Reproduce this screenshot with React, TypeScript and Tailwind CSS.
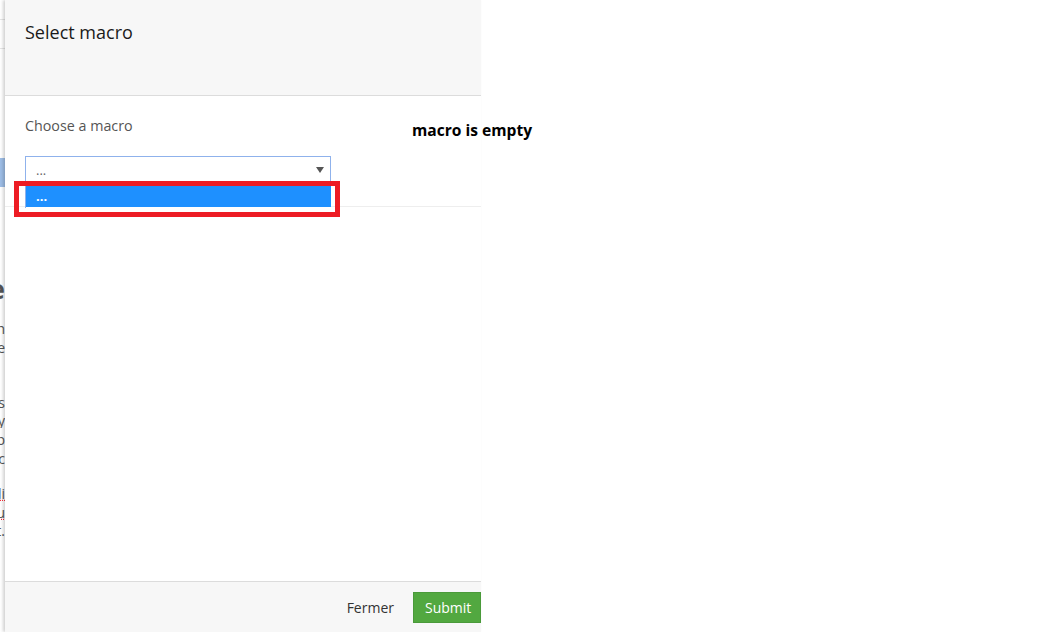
import React from "react";

const bgLines: { top: number; text: string; cls: string }[] = [
  { top: 276, text: "Macro title", cls: "text-[26px] font-bold text-[#555]" },
  { top: 322, text: "Some batch", cls: "text-[14px] text-[#555]" },
  { top: 341, text: "the name", cls: "text-[14px] text-[#555]" },
  { top: 396, text: "macros", cls: "text-[14px] text-[#555]" },
  { top: 414, text: "any", cls: "text-[14px] text-[#555]" },
  { top: 433, text: "tab", cls: "text-[14px] text-[#555]" },
  { top: 452, text: "etc", cls: "text-[14px] text-[#555]" },
  { top: 487, text: "edi", cls: "text-[14px] text-[#555] underline decoration-dotted decoration-red-500" },
  { top: 506, text: "au", cls: "text-[14px] text-[#555] underline decoration-dotted decoration-red-500" },
  { top: 524, text: "t.", cls: "text-[14px] text-[#555]" },
];

export default function App() {
  return (
    <div
      className="relative w-[1046px] h-[632px] overflow-hidden bg-white"
      style={{ fontFamily: '"Open Sans", "Liberation Sans", sans-serif' }}
    >
      {/* background page strip behind the modal */}
      <div className="relative w-[5px] h-[632px] overflow-hidden bg-white">
        <div className="absolute left-0 top-[19px] w-[5px] h-px bg-[#e5e5e5]" />
        <div className="absolute left-0 top-[48px] w-[5px] h-px bg-[#e5e5e5]" />
        <div className="absolute left-0 top-[158px] w-[5px] h-[29px] bg-[#9dbde6]" />
        {bgLines.map((l, i) => (
          <div
            key={i}
            className="absolute left-0 w-[5px] flex justify-end overflow-hidden whitespace-nowrap leading-none"
            style={{ top: l.top }}
          >
            <span className={l.cls}>{l.text}</span>
          </div>
        ))}
      </div>

      {/* modal */}
      <div className="absolute left-[5px] top-0 w-[476px] h-[632px] flex flex-col bg-white shadow-[-2px_0_3px_rgba(0,0,0,0.18)]">
        <div className="h-[96px] shrink-0 bg-[#f7f7f7] border-b border-[#dcdcdc] px-5 pt-[20px]">
          <h1 className="text-[18px] leading-[25px] text-[#1a1a1a]">Select macro</h1>
        </div>
        <div className="h-[111px] shrink-0 border-b border-[#eeeeee] px-5 pt-[20px]">
          <div className="text-[14.3px] leading-[20px] text-[#555]">Choose a macro</div>
          <div className="relative mt-[20px] w-[306px]">
            <div className="h-[27px] border border-[#8fb2ec] border-b-0 bg-white flex items-center justify-between pl-[10px] pr-[6px]">
              <span className="text-[13px] text-[#666] leading-none">...</span>
              <svg width="8" height="6" viewBox="0 0 8 6">
                <path d="M0 0 H8 L4 6 Z" fill="#555" />
              </svg>
            </div>
            <div className="h-[25px] border-l border-[#8fb2ec] bg-white pt-[3px]">
              <div className="h-[21px] bg-[#1e90ff] flex items-center pl-[10px]">
                <span className="text-[13px] text-white font-bold leading-none">...</span>
              </div>
            </div>
          </div>
        </div>
        <div className="flex-1" />
        <div className="h-[51px] shrink-0 bg-[#f7f7f7] border-t border-[#dcdcdc] flex items-center justify-end">
          <span className="text-[14px] text-[#333] mr-[19px]">Fermer</span>
          <div className="h-[31px] w-[68px] bg-[#52a840] border border-[#4a9a3a] flex items-center pl-[11px] mt-[1px]">
            <span className="text-[14px] text-white">Submit</span>
          </div>
        </div>
      </div>

      {/* red highlight rectangle */}
      <div className="absolute left-[14px] top-[181px] w-[326px] h-[36px] border-[5px] border-[#ed1c24]" />

      {/* annotation */}
      <div className="absolute left-[412px] top-[119px] text-[15.6px] font-bold text-black leading-[22px] whitespace-nowrap">
        macro is empty
      </div>
    </div>
  );
}
